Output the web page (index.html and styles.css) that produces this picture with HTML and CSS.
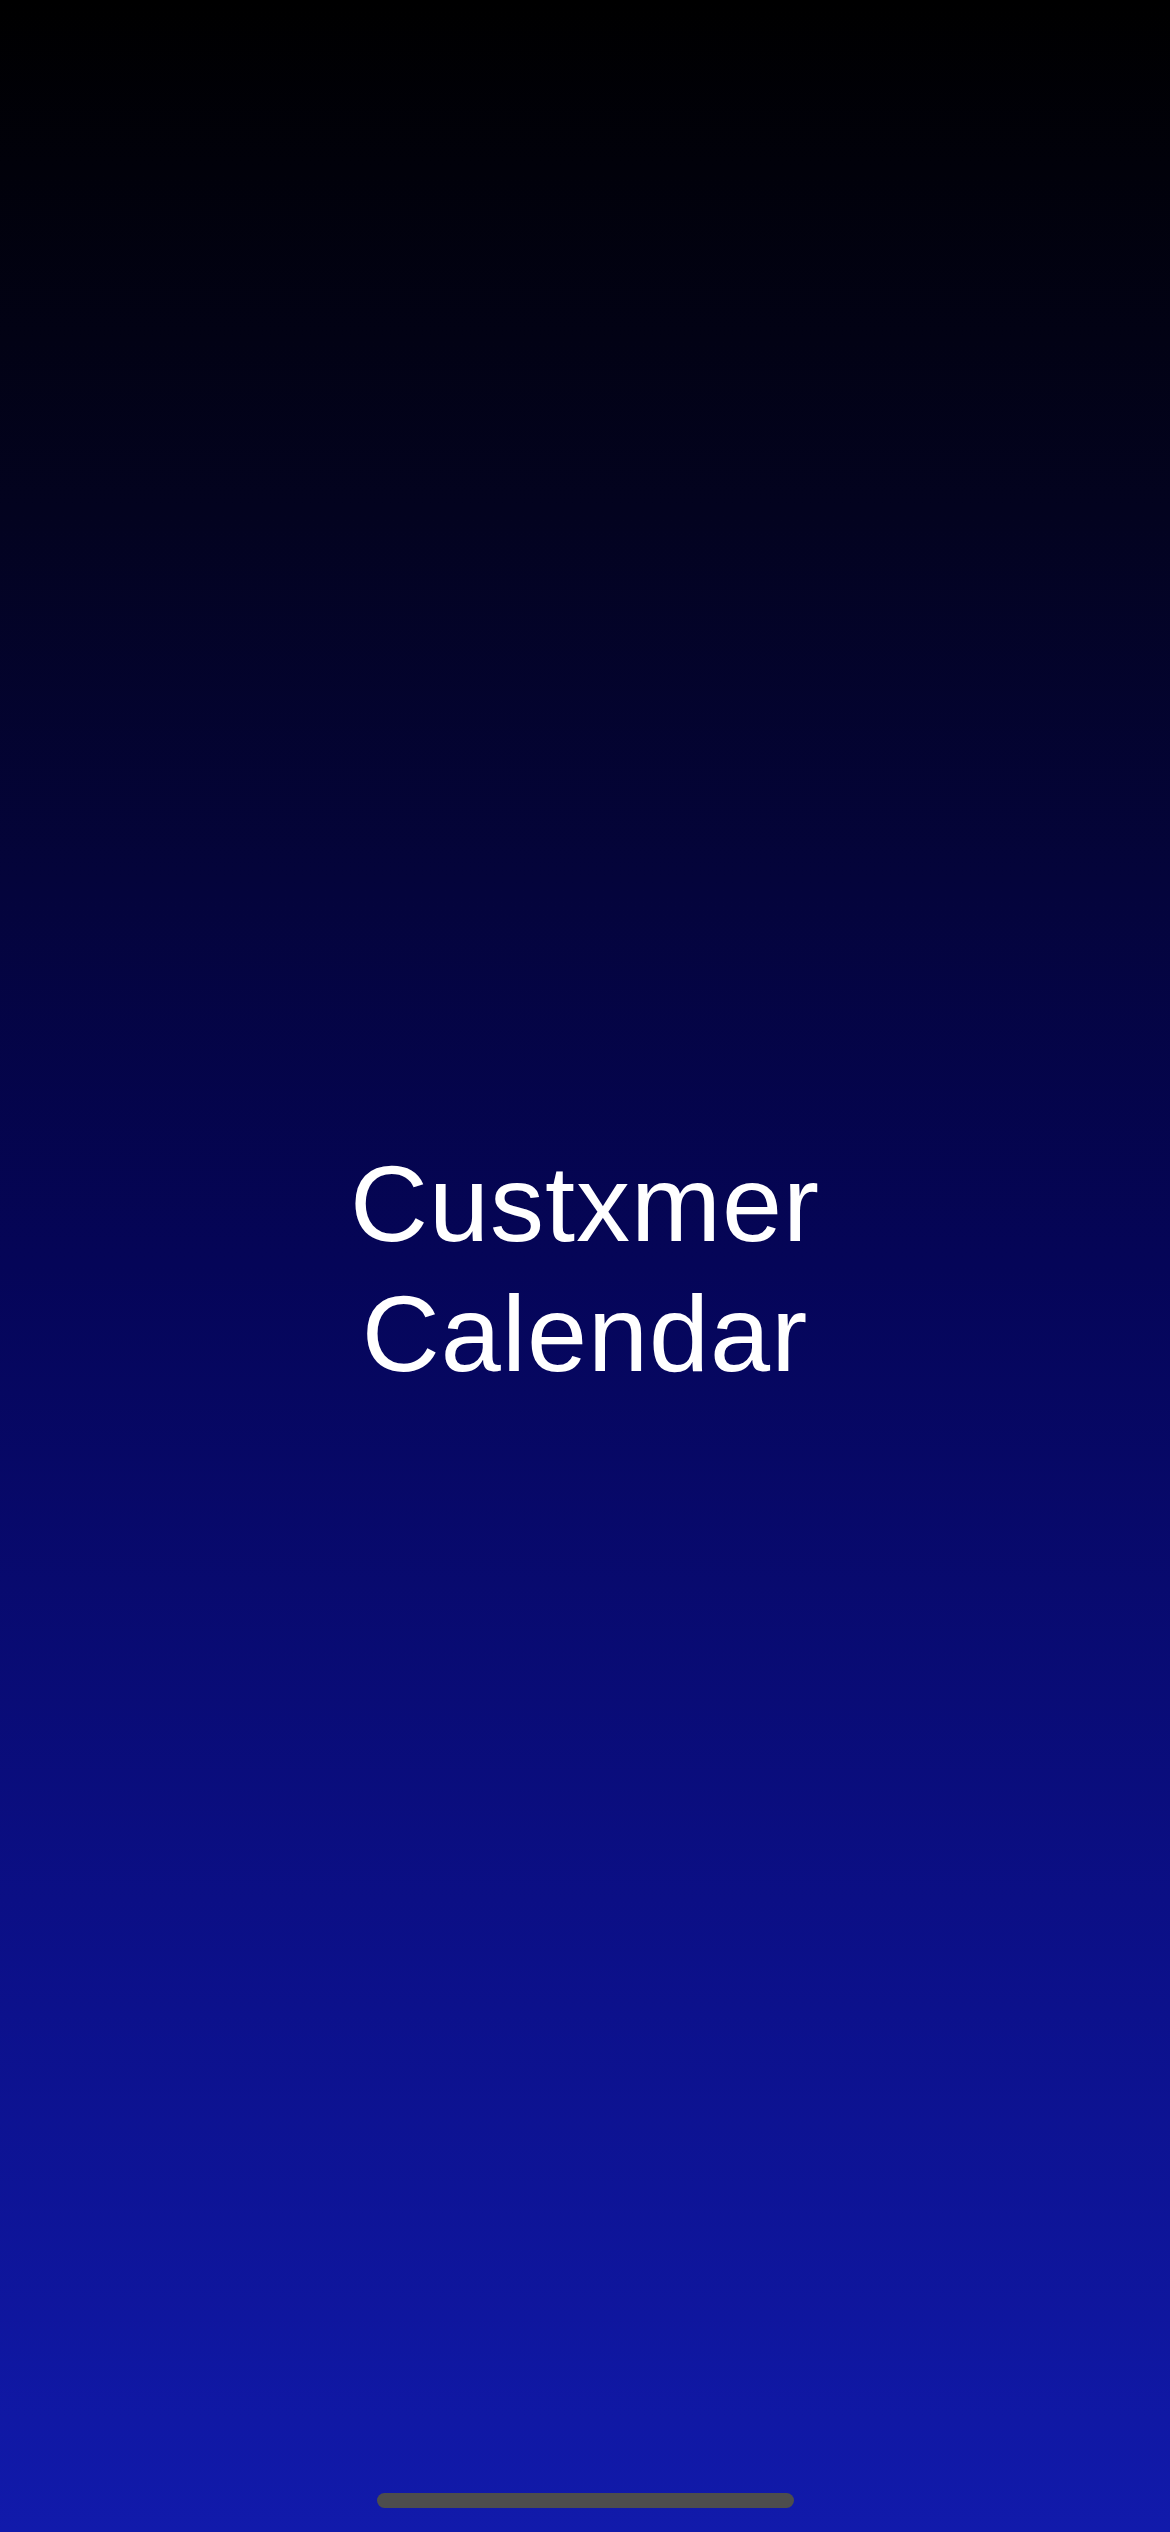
FILE: index.html
```html
<!DOCTYPE html>
<html lang="en">
<head>
<meta charset="utf-8">
<title>Custxmer Calendar</title>
<link rel="stylesheet" href="styles.css">
</head>
<body>
<div class="screen">
  <h1 class="title">Custxmer<br>Calendar</h1>
  <div class="home-indicator"></div>
</div>
</body>
</html>
```
FILE: styles.css
```css
html, body {
  margin: 0;
  padding: 0;
}
body {
  width: 1170px;
  height: 2532px;
  overflow: hidden;
}
.screen {
  position: relative;
  width: 1170px;
  height: 2532px;
  box-sizing: border-box;
  padding-top: 6px;
  display: flex;
  align-items: center;
  justify-content: center;
  background: linear-gradient(to bottom, #000000 0%, #03031f 20%, #050558 50%, #0b0f85 75%, #111aab 100%);
}
.title {
  margin: 0;
  font-family: "Liberation Sans", Arial, sans-serif;
  font-weight: 400;
  font-size: 108px;
  line-height: 1.2;
  letter-spacing: 1px;
  color: #ffffff;
  text-align: center;
}
.home-indicator {
  position: absolute;
  left: 377px;
  bottom: 24px;
  width: 417px;
  height: 15px;
  border-radius: 8px;
  background: #4d4d4d;
}
```
